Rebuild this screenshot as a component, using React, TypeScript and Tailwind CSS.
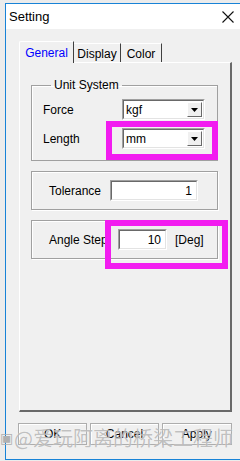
import React from "react";

const font = { fontFamily: '"Liberation Sans", Arial, sans-serif' };

function Sunken({ className, children }: { className?: string; children?: React.ReactNode }) {
  return (
    <div
      className={`border border-t-[#a0a0a0] border-l-[#a0a0a0] border-r-white border-b-white ${className ?? ""}`}
    >
      <div className="h-full border border-t-[#696969] border-l-[#696969] border-r-[#e3e3e3] border-b-[#e3e3e3] bg-white">
        {children}
      </div>
    </div>
  );
}

function Combo({ value }: { value: string }) {
  return (
    <Sunken className="w-[83px] h-[21px]">
      <div className="flex h-full items-center">
        <span className="flex-1 pl-[2px] text-[12px] leading-none text-black">{value}</span>
        <div className="mr-px flex h-[15px] w-[15px] items-center justify-center border border-t-white border-l-white border-r-[#696969] border-b-[#696969] bg-[#f0f0f0]">
          <svg width="7" height="4" viewBox="0 0 7 4">
            <path d="M0 0h7L3.5 4z" fill="#000" />
          </svg>
        </div>
      </div>
    </Sunken>
  );
}

function Group({ children, className }: { children: React.ReactNode; className?: string }) {
  return (
    <div className={`border border-[#a0a0a0] shadow-[inset_1px_1px_0_#fff,1px_1px_0_#fff] ${className ?? ""}`}>
      {children}
    </div>
  );
}

function Button({ label, className }: { label: string; className: string }) {
  return (
    <div
      className={`flex h-[22px] items-center justify-center border border-[#adadad] bg-[#f0f0f0] text-[12px] text-black shadow-[inset_1px_1px_0_#fff] ${className}`}
    >
      {label}
    </div>
  );
}

export default function App() {
  return (
    <div className="relative h-[461px] w-[240px] overflow-hidden bg-[#ececec] pt-[3px] pl-[5px]" style={font}>
      {/* Window */}
      <div className="flex h-[457px] flex-col border-l border-t border-b border-[#1883d7]">
        {/* Title bar */}
        <div className="flex h-[25px] items-center justify-between bg-white pl-[3px] pr-[6px]">
          <span className="text-[13px] text-black">Setting</span>
          <svg width="12" height="12" viewBox="0 0 12 12" className="mt-px">
            <path d="M0.5 0.5L11.5 11.5M11.5 0.5L0.5 11.5" stroke="#111" strokeWidth="1.1" />
          </svg>
        </div>

        {/* Body */}
        <div className="flex flex-1 flex-col bg-[#f0f0f0] pl-[13px] pr-[8px]">
          {/* Tabs */}
          <div className="flex h-[33px] items-end pt-[12px]">
            <div className="relative z-10 -mb-px flex h-[22px] w-[55px] items-start justify-center rounded-tl-[2px] border-l border-t border-r border-l-white border-t-white border-r-[#404040] bg-[#f0f0f0] pt-[2px] text-[12px] text-[#0000ff]">
              General
            </div>
            <div className="flex h-[19px] w-[47px] items-start justify-center border-t border-r border-t-white border-r-[#404040] pt-px text-[12px] text-black">
              Display
            </div>
            <div className="flex h-[19px] w-[41px] items-start justify-center border-t border-r border-t-white border-r-[#404040] pt-px text-[12px] text-black">
              Color
            </div>
          </div>

          {/* Tab panel */}
          <div className="flex h-[350px] flex-col border-l border-t border-white border-r-2 border-b-2 border-r-[#696969] border-b-[#696969] pl-[11px] pr-[12px] pt-[15px]">
            <fieldset className="border border-[#a0a0a0] pl-[11px] pb-[11px] shadow-[inset_1px_1px_0_#fff]">
              <legend className="ml-[8px] px-[3px] text-[12px] leading-[14px] text-black">Unit System</legend>
              <div className="flex items-center pt-[7px]">
                <span className="w-[79px] text-[12px] text-black">Force</span>
                <Combo value="kgf" />
              </div>
              <div className="mt-[8px] flex items-center">
                <span className="w-[79px] text-[12px] text-black">Length</span>
                <Combo value="mm" />
              </div>
            </fieldset>

            <Group className="mt-[10px] h-[39px]">
              <div className="flex h-full items-center pl-[17px]">
                <span className="w-[61px] text-[12px] text-black">Tolerance</span>
                <Sunken className="h-[21px] w-[88px]">
                  <div className="flex h-full items-center justify-end pr-[4px] text-[12px] text-black">1</div>
                </Sunken>
              </div>
            </Group>

            <Group className="mt-[10px] h-[39px]">
              <div className="flex h-full items-center pl-[17px]">
                <span className="w-[69px] text-[12px] text-black">Angle Step</span>
                <Sunken className="h-[21px] w-[49px]">
                  <div className="flex h-full items-center justify-end pr-[4px] text-[12px] text-black">10</div>
                </Sunken>
                <span className="ml-[8px] text-[12px] text-black">[Deg]</span>
              </div>
            </Group>
          </div>

          {/* Buttons */}
          <div className="-ml-px mt-[11px] flex gap-[3px]">
            <Button label="OK" className="w-[70px]" />
            <Button label="Cancel" className="w-[69px]" />
            <Button label="Apply" className="w-[71px]" />
          </div>
        </div>
      </div>

      {/* Highlight boxes */}
      <div className="absolute left-[106px] top-[121px] h-[39px] w-[112px] border-[6px] border-[#f21cf0]" />
      <div className="absolute left-[105px] top-[220px] h-[49px] w-[123px] border-[6px] border-[#f21cf0]" />

      {/* Watermark */}
      <div className="pointer-events-none absolute left-0 top-[428px] flex items-center">
        <span className="mr-[1px] text-[14px] leading-none text-[#b0b0b0]">▣</span>
        <span
          className="text-[20px] leading-none text-[rgba(140,140,140,0.55)] [text-shadow:0_0_1px_rgba(255,255,255,0.9)]"
          style={{ fontFamily: '"Noto Sans CJK SC", "Liberation Sans", sans-serif' }}
        >
          @爱玩阿离的桥梁工程师
        </span>
      </div>
    </div>
  );
}
